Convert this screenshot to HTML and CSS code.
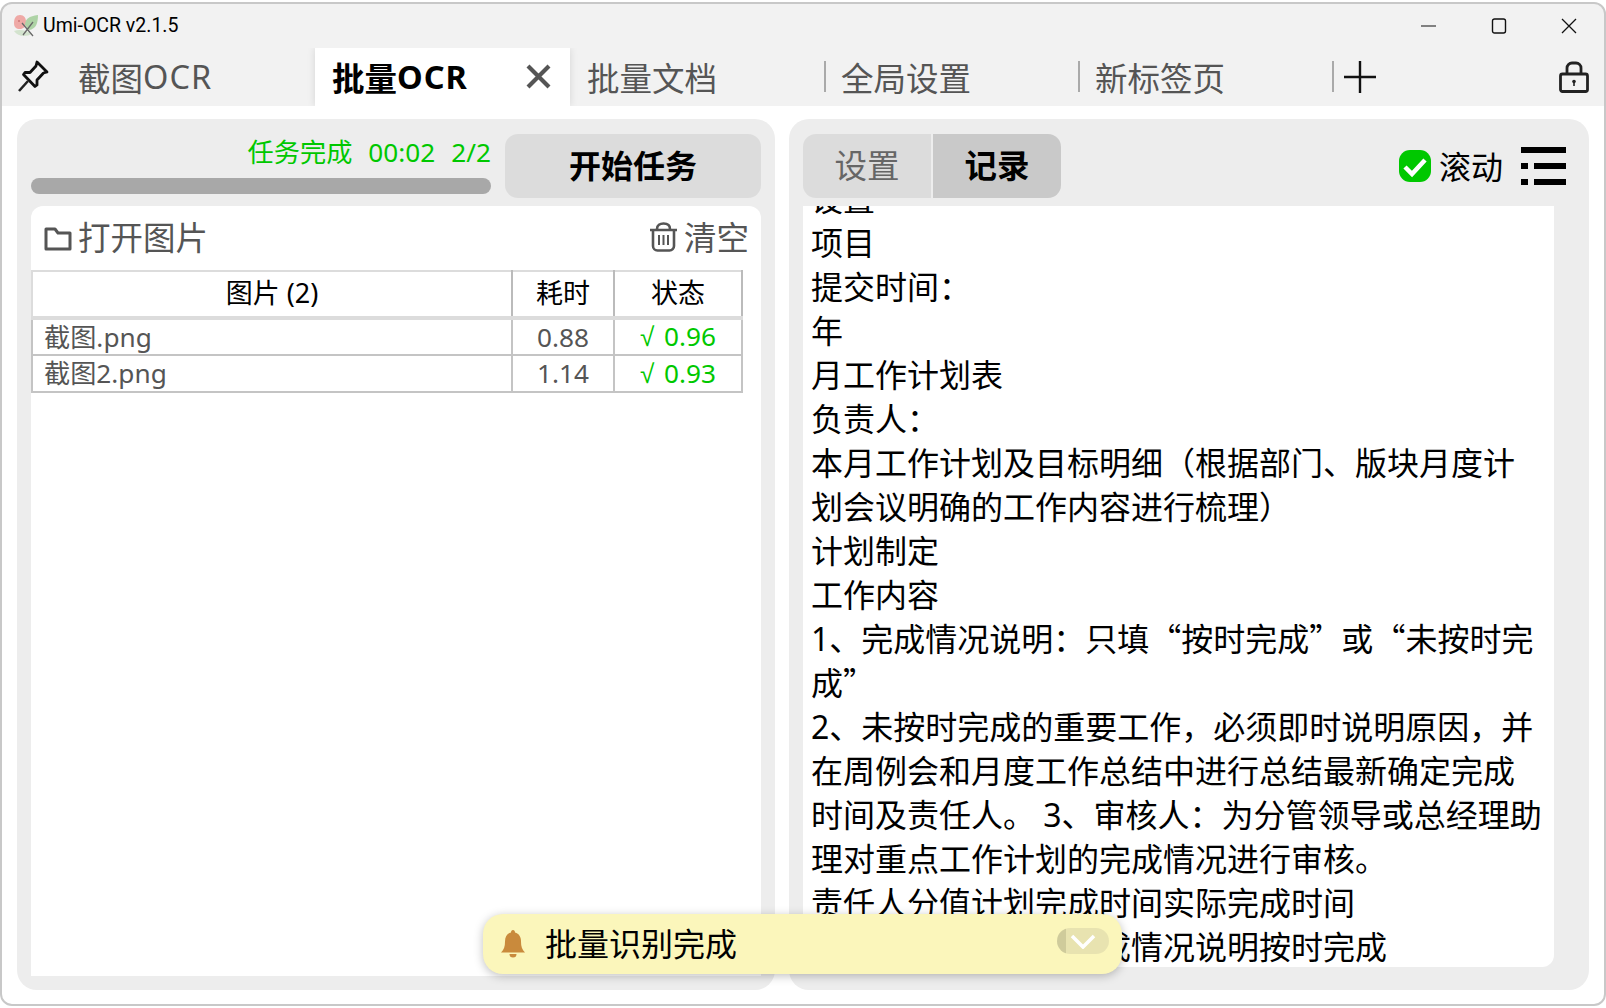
FILE: index.html
```html
<!DOCTYPE html>
<html lang="zh-CN">
<head>
  <meta charset="UTF-8">
  <title>Umi-OCR v2.1.5</title>
  <link rel="stylesheet" href="styles.css">
</head>
<body>
  <div class="window">
    <div class="titlebar">
      <svg class="app-icon" viewBox="0 0 24 24">
        <path d="M0 9c0-5 2-8 6-8 4 0 6 3 6 7 0 5-3 7-6 7-4 0-6-2-6-6z" fill="#efa9a6"/>
        <path d="M11 11c0-6 4-9 13-10 0 8-2 14-9 15z" fill="#aed3a6"/>
        <path d="M0 17c5-2 12-1 18 3-6 3-14 3-18-3z" fill="#d3e3ce"/>
        <path d="M8 9l11 13M19 8L9 21" stroke="#6a6a6a" stroke-width="1.3" fill="none"/>
        <circle cx="5" cy="7" r="1" fill="#c77"/>
      </svg>
      <span class="app-title">Umi-OCR v2.1.5</span>
      <div class="win-btns">
        <svg viewBox="0 0 16 16"><path d="M0 8h15" stroke="#111" stroke-width="1.2"/></svg>
        <svg viewBox="0 0 16 16"><rect x="1.500" y="1" width="13" height="14" rx="2" fill="none" stroke="#111" stroke-width="1.4"/></svg>
        <svg viewBox="0 0 16 16"><path d="M1 1l14 14M15 1L1 15" stroke="#111" stroke-width="1.3"/></svg>
      </div>
    </div>

    <div class="tabbar">
      <button class="pin">
        <svg viewBox="0 0 32 32"><path d="M20 2l10 10-3.500 1-6.500 7 0 5-2 1.500L6.500 14.500l1.500-2 5 0 6-6.500z" fill="none" stroke="#111" stroke-width="2.8" stroke-linejoin="round"/><path d="M11 21L2 31" stroke="#222" stroke-width="2.600"/></svg>
      </button>
      <div class="tab">截图<span class="latin">OCR</span></div>
      <div class="tab active">批量<span class="latin">OCR</span>
        <svg class="tab-close" viewBox="0 0 25 25"><path d="M2 2l21 21M23 2L2 23" stroke="#555" stroke-width="4.200"/></svg>
      </div>
      <div class="tab no-line">批量文档</div>
      <div class="tab">全局设置</div>
      <div class="tab">新标签页</div>
      <div class="tab-sep"></div>
      <svg class="add" viewBox="0 0 32 32"><path d="M16 0v32M0 16h32" stroke="#111" stroke-width="2.4"/></svg>
      <svg class="lock" viewBox="0 0 30 33"><path d="M8 14V8a5 5 0 0 1 5-5h4a5 5 0 0 1 5 5v6" fill="none" stroke="#222" stroke-width="2.800"/><rect x="1.500" y="14" width="27" height="17.500" rx="2" fill="none" stroke="#222" stroke-width="2.800"/><circle cx="15" cy="21.500" r="1.800" fill="#222"/><rect x="14.200" y="22" width="1.600" height="4" fill="#222"/></svg>
    </div>

    <div class="content">
      <div class="panel left">
        <div class="task-bar">
          <div class="task-info">
            <div class="task-status"><span>任务完成</span><span>00:02</span><span>2/2</span></div>
            <div class="progress"></div>
          </div>
          <button class="start-btn"><span>开始任务</span></button>
        </div>
        <div class="card">
          <div class="card-tools">
            <div class="tool">
              <svg class="folder" viewBox="0 0 28 25"><path d="M2 23V3h9l3 4h12v16z" fill="none" stroke="#555" stroke-width="3" stroke-linejoin="round"/></svg>
              <span>打开图片</span>
            </div>
            <div class="tool">
              <svg class="trash" viewBox="0 0 29 30"><path d="M1 8h27M8 7c0-4 3-5.500 6.500-5.500S21 3 21 7M4 8v16a4.500 4.500 0 0 0 4.500 4.500h12A4.500 4.500 0 0 0 25 24V8" fill="none" stroke="#555" stroke-width="2.600"/><path d="M10 13v10M14.500 13v10M19 13v10" stroke="#555" stroke-width="2"/></svg>
              <span>清空</span>
            </div>
          </div>
          <table class="files">
            <thead>
              <tr><th class="c-name">图片 (2)</th><th class="c-time">耗时</th><th class="c-state">状态</th></tr>
            </thead>
            <tbody>
              <tr><td class="c-name">截图.png</td><td class="c-time">0.88</td><td class="c-state ok"><span class="tick">√</span> 0.96</td></tr>
              <tr><td class="c-name">截图2.png</td><td class="c-time">1.14</td><td class="c-state ok"><span class="tick">√</span> 0.93</td></tr>
            </tbody>
          </table>
        </div>
      </div>

      <div class="panel right">
        <div class="right-top">
          <div class="seg">
            <div class="seg-item"><span>设置</span></div>
            <div class="seg-item on"><span>记录</span></div>
          </div>
          <div class="scroll-check">
            <svg viewBox="0 0 32 32"><rect width="32" height="32" rx="11" fill="#00c800"/><path d="M6 17l7 7 13-14" fill="none" stroke="#fff" stroke-width="4.500"/></svg>
            <span>滚动</span>
          </div>
          <svg class="list-icon" viewBox="0 0 45 38"><path d="M0 0h45v6H0zM0 16h7v6H0zM13 16h32v6H13zM0 32h7v6H0zM13 32h32v6H13z" fill="#000"/></svg>
        </div>
        <div class="log">
          <div class="log-text">
            <p>设置</p>
            <p>项目</p>
            <p>提交时间：</p>
            <p>年</p>
            <p>月工作计划表</p>
            <p>负责人：</p>
            <p>本月工作计划及目标明细（根据部门、版块月度计划会议明确的工作内容进行梳理）</p>
            <p>计划制定</p>
            <p>工作内容</p>
            <p>1、完成情况说明：只填<span class="q">“</span>按时完成<span class="q">”</span>或<span class="q">“</span>未按时完成<span class="q">”</span></p>
            <p>2、未按时完成的重要工作，必须即时说明原因，并在周例会和月度工作总结中进行总结最新确定完成时间及责任人。 3、审核人：为分管领导或总经理助理对重点工作计划的完成情况进行审核。</p>
            <p>责任人分值计划完成时间实际完成时间</p>
            <p class="under-toast">成情况说明按时完成</p>
          </div>
        </div>
      </div>
    </div>

    <div class="toast">
      <svg class="bell" viewBox="0 0 24 28"><path d="M12 0c1.300 0 2 1 2 2.500 4 1 6 4.500 6 9 0 5 1 8 4 11H0c3-3 4-6 4-11 0-4.500 2-8 6-9C10 1 10.700 0 12 0z" fill="#c98a3c"/><path d="M8.500 24h7a3.500 3.500 0 0 1-7 0z" fill="#c98a3c"/></svg>
      <span class="toast-text">批量识别完成</span>
      <div class="toast-btn">
        <svg viewBox="0 0 26 15"><path d="M2 2l11 11L24 2" fill="none" stroke="#fff" stroke-width="3.500"/></svg>
      </div>
    </div>
  </div>
</body>
</html>
```

FILE: styles.css
```css
* {
  box-sizing: border-box;
}

html, body {
  height: 100%;
}

body {
  margin: 0;
  padding: 4px 2px;
  background-color: #fff;
  font-family: "Noto Sans", "Noto Sans CJK SC", sans-serif;
  color: #000;
  overflow: hidden;
}

svg {
  display: block;
}

.window {
  position: relative;
  height: 1000px;
  background-color: #fff;
  border-radius: 10px;
  outline: 2px solid #c8c8c8;
  overflow: hidden;
}

.titlebar {
  display: flex;
  align-items: center;
  height: 44px;
  padding-left: 12px;
  background-color: #f2f2f2;
}

.app-icon {
  width: 24px;
  height: 24px;
}

.app-title {
  margin-left: 5px;
  padding-bottom: 1px;
  font-family: Roboto, sans-serif;
  font-size: 19.5px;
}

.win-btns {
  display: flex;
  align-items: center;
  gap: 54px;
  margin-left: auto;
  margin-right: 27px;
}

.win-btns svg {
  width: 16px;
  height: 16px;
}

.tabbar {
  display: flex;
  align-items: stretch;
  height: 58px;
  background-color: #f2f2f2;
}

.pin {
  width: 62px;
  padding: 0 0 0 15px;
  border: none;
  background: none;
}

.pin svg {
  width: 32px;
  height: 32px;
  margin-top: -2px;
}

.tab {
  position: relative;
  display: flex;
  align-items: center;
  width: 254px;
  padding-left: 17px;
  padding-bottom: 1px;
  font-size: 32.5px;
  color: #555;
}

.tab:first-of-type {
  width: 251px;
  padding-left: 14px;
}

.latin {
  letter-spacing: 1px;
}

.tab::before {
  content: "";
  position: absolute;
  left: 0;
  top: 13px;
  width: 2px;
  height: 31px;
  background-color: #aaa;
}

.tab.active {
  width: 255px;
  background-color: #fff;
  color: #000;
  font-weight: 700;
  box-shadow: 0 0 8px rgba(0, 0, 0, 0.12);
  clip-path: inset(0 -10px 0 -10px);
}

.tab.active::before,
.tab.active + .tab::before,
.tab.no-line::before,
.pin + .tab::before {
  display: none;
}

.tab-close {
  width: 25px;
  height: 25px;
  margin-left: auto;
  margin-right: 19px;
}

.tab-sep {
  width: 2px;
  height: 31px;
  margin-top: 13px;
  background-color: #aaa;
}

.add {
  width: 32px;
  height: 32px;
  margin: 13px 0 0 10px;
}

.lock {
  width: 30px;
  height: 33px;
  margin: 12px 15px 0 auto;
}

.content {
  display: flex;
  gap: 14px;
  height: 884px;
  padding: 13px 15px 0 15px;
}

.panel {
  display: flex;
  flex-direction: column;
  height: 871px;
  padding: 15px 14px 14px;
  background-color: #ededed;
  border-radius: 20px;
}

.panel.left {
  width: 758px;
}

.panel.right {
  width: 800px;
  padding-right: 35px;
}

.task-bar {
  display: flex;
  gap: 14px;
  height: 64px;
  margin-bottom: 8px;
}

.task-info {
  display: flex;
  flex-direction: column;
  justify-content: flex-end;
  width: 460px;
}

.task-status {
  display: flex;
  justify-content: flex-end;
  gap: 16px;
  margin-bottom: 9px;
  font-size: 26.2px;
  line-height: 34px;
  color: #00c800;
}

.progress {
  height: 16px;
  margin-bottom: 4px;
  background-color: #a8a8a8;
  border-radius: 8px;
}

.start-btn {
  flex: 1;
  padding: 0 0 4px;
  border: none;
  border-radius: 13px;
  background-color: #dcdcdc;
  font-family: inherit;
  font-size: 32px;
  font-weight: 700;
  color: #000;
}

.card {
  flex: 1;
  background-color: #fff;
  border-radius: 12px 12px 0 0;
  font-size: 32.5px;
  color: #555;
}

.card-tools {
  display: flex;
  justify-content: space-between;
  align-items: center;
  height: 64px;
  padding: 0 12px 0 13px;
}

.tool {
  display: flex;
  align-items: center;
  gap: 6px;
}

.tool span {
  padding-bottom: 4px;
}

.folder {
  width: 28px;
  height: 25px;
}

.trash {
  width: 29px;
  height: 30px;
  margin-top: -2px;
}

.files {
  width: 712px;
  border-collapse: collapse;
  table-layout: fixed;
  font-size: 26.2px;
}

.files th,
.files td {
  padding: 0;
  border: 2px solid #c4c4c4;
  text-align: center;
  font-weight: 400;
  white-space: nowrap;
}

.files th {
  height: 47px;
  padding-bottom: 2px;
  font-size: 27px;
  line-height: 36px;
  color: #000;
  border-color: #dcdcdc #bbb #dcdcdc #dcdcdc;
  border-bottom-width: 4px;
}

.files td {
  height: 37px;
  padding-bottom: 1px;
  line-height: 30px;
}

.files .c-name {
  width: 480px;
}

.files .c-time {
  width: 102px;
}

.files td.c-name {
  padding-left: 11px;
  text-align: left;
}

.files .ok {
  color: #00c800;
}

.tick {
  margin-right: 3px;
  font-family: "Liberation Sans", sans-serif;
}

.right-top {
  display: flex;
  align-items: center;
  height: 64px;
  margin-bottom: 8px;
}

.seg {
  display: flex;
  gap: 2px;
  height: 64px;
  border-radius: 13px;
  overflow: hidden;
  font-size: 32.5px;
}

.seg-item {
  display: flex;
  align-items: center;
  justify-content: center;
  width: 128px;
  padding-bottom: 4px;
  background-color: #dcdcdc;
  color: #666;
}

.seg-item.on {
  background-color: #c9c9c9;
  color: #000;
  font-weight: 700;
}

.scroll-check {
  display: flex;
  align-items: center;
  gap: 8px;
  margin-left: auto;
  font-size: 32px;
}

.scroll-check span {
  padding-bottom: 2px;
}

.scroll-check svg {
  width: 32px;
  height: 32px;
}

.list-icon {
  width: 45px;
  height: 38px;
  margin-left: 18px;
  margin-right: -12px;
}

.log {
  height: 761px;
  overflow: hidden;
  background-color: #fff;
  border-radius: 0 0 12px 12px;
}

.log-text {
  margin-top: -29px;
  padding: 0 8px 0 8px;
  font-size: 32px;
  line-height: 44px;
}

.log-text p {
  margin: 0;
}

.q {
  line-height: 0;
  font-family: "Noto Sans CJK SC", sans-serif;
}

.under-toast {
  text-indent: 9em;
}

.toast {
  position: absolute;
  left: 481px;
  top: 910px;
  display: flex;
  align-items: center;
  width: 639px;
  height: 60px;
  padding: 0 13px 0 18px;
  background-color: #fbf6bb;
  border-radius: 20px;
  box-shadow: 0 2px 10px rgba(0, 0, 0, 0.25);
}

.bell {
  width: 24px;
  height: 28px;
}

.toast-text {
  margin-left: 20px;
  padding-bottom: 4px;
  font-size: 32px;
}

.toast-btn {
  display: flex;
  align-items: center;
  justify-content: center;
  width: 52px;
  height: 26px;
  margin-left: auto;
  margin-top: -6px;
  background: linear-gradient(to right, #cfcb9b 9px, #e8e3b0 9px);
  border-radius: 13px;
}

.toast-btn svg {
  width: 26px;
  height: 15px;
}
```
